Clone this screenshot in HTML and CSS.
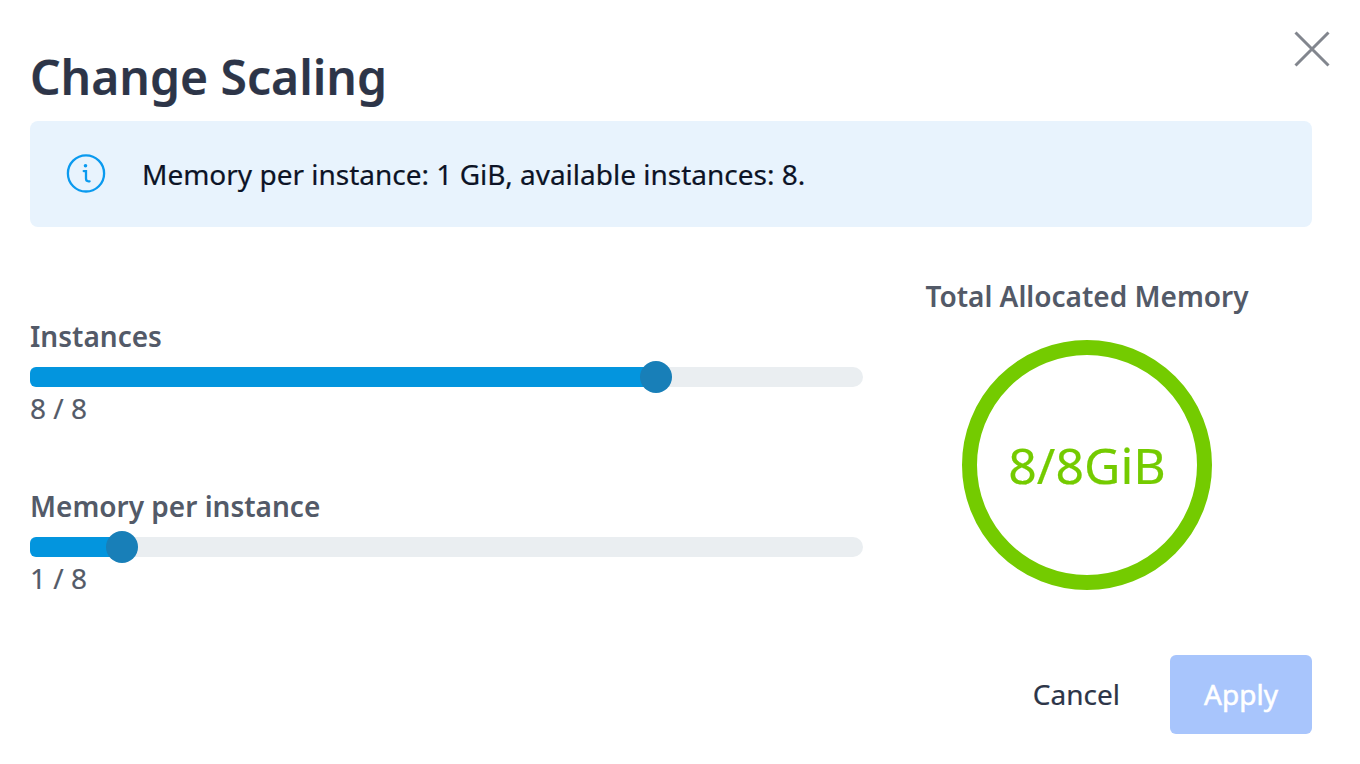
FILE: index.html
```html
<!DOCTYPE html>
<html lang="en">
<head>
<meta charset="utf-8">
<title>Change Scaling</title>
<link rel="stylesheet" href="styles.css">
</head>
<body>
<main class="dialog">
  <button class="close" aria-label="Close"><svg width="36" height="36" viewBox="0 0 36 36"><path d="M1.5 1.5 34.5 34.5M34.5 1.5 1.5 34.5"/></svg></button>
  <h1 class="title">Change Scaling</h1>
  <div class="notice">
    <svg class="info" width="40" height="40" viewBox="0 0 40 40"><circle cx="20" cy="19.4" r="18.1"/><path d="M17.7 17.1H20V24.6q0 2.7 2.5 2.7H23.6"/><circle class="dot" cx="19.5" cy="11.7" r="1.8"/></svg>
    <span class="notice-text">Memory per instance: 1 GiB, available instances: 8.</span>
  </div>
  <div class="content">
    <div class="sliders">
      <section class="field">
        <div class="label">Instances</div>
        <div class="track"><div class="fill" style="width:626px"><span class="thumb"></span></div></div>
        <div class="value">8 / 8</div>
      </section>
      <section class="field">
        <div class="label">Memory per instance</div>
        <div class="track"><div class="fill" style="width:92px"><span class="thumb"></span></div></div>
        <div class="value">1 / 8</div>
      </section>
    </div>
    <div class="memory">
      <div class="label">Total Allocated Memory</div>
      <div class="ring"><span class="total">8/8GiB</span></div>
    </div>
  </div>
  <div class="actions">
    <button class="cancel">Cancel</button>
    <button class="apply">Apply</button>
  </div>
</main>
</body>
</html>
```
FILE: styles.css
```css
* { box-sizing: border-box; }
body { margin: 0; background: #fff; font-family: "Noto Sans", sans-serif; -webkit-text-stroke: 0.2px currentColor; }
button { border: 0; padding: 0; background: none; font: inherit; }
.dialog { position: relative; width: 1360px; height: 764px; padding: 43px 48px 0 30px; overflow: hidden; }
.close { position: absolute; top: 31px; right: 30px; width: 36px; height: 36px; }
.close svg { display: block; fill: none; stroke: #82868e; stroke-width: 3; }
.title { margin: 0 0 10px; font-size: 48px; font-weight: 600; line-height: 68px; color: #2d3548; }
.notice { display: flex; align-items: center; gap: 36px; height: 106px; padding: 0 36px; border-radius: 8px; background: #e8f3fd; }
.info { fill: none; stroke: #0a9aef; stroke-width: 2.3; stroke-linecap: round; }
.info .dot { fill: #0a9aef; stroke: none; }
.notice-text { font-size: 28px; line-height: 40px; color: #0c1326; }
.content { display: flex; justify-content: space-between; height: 428px; padding-top: 49px; }
.sliders { display: flex; flex: none; flex-direction: column; gap: 50px; width: 833px; padding-top: 40px; }
.field { height: 120px; }
.label { font-size: 28px; font-weight: 600; line-height: 40px; color: #535a68; white-space: nowrap; -webkit-text-stroke-width: 0; }
.track { height: 20px; margin-top: 11px; border-radius: 10px; background: #eaeef1; }
.fill { display: flex; align-items: center; justify-content: flex-end; height: 20px; border-radius: 6px 0 0 6px; background: #0395de; }
.thumb { flex: none; width: 32px; height: 32px; margin-right: -16px; border-radius: 50%; background: #187fb8; }
.value { margin-top: 1px; font-size: 28px; line-height: 40px; color: #535a68; }
.memory { display: flex; flex: none; flex-direction: column; align-items: center; width: 450px; margin-left: -1px; }
.ring { display: flex; align-items: center; justify-content: center; width: 250px; height: 250px; margin-top: 24px; border: 15px solid #74cb00; border-radius: 50%; }
.total { font-size: 50px; color: #74cb00; }
.actions { display: flex; justify-content: flex-end; gap: 50px; height: 79px; font-size: 28px; }
.actions button { padding-bottom: 2px; }
.cancel { color: #2d3548; }
.apply { width: 142px; border-radius: 6px; background: #a8c5fc; color: #fff; -webkit-text-stroke-width: 0.5px; }
```
